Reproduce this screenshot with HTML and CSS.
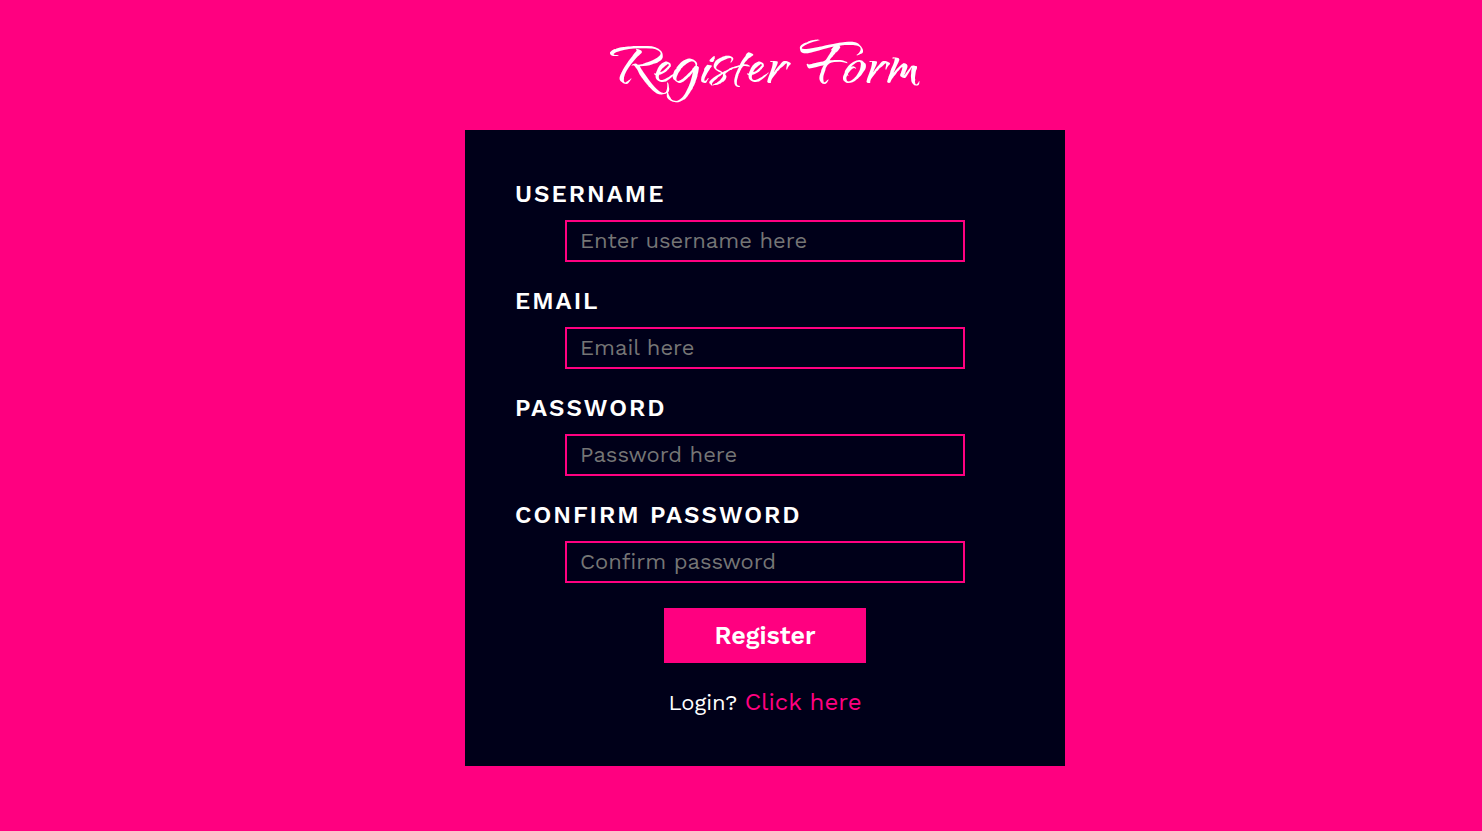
FILE: index.html
```html
<!DOCTYPE html>
<html lang="en">
<head>
<meta charset="utf-8">
<title>Register Form</title>
<link rel="stylesheet" href="styles.css">
</head>
<body>
<main class="page">
  <h1 class="title">Register Form</h1>
  <form class="card">
    <div class="field">
      <label class="label" for="username">USERNAME</label>
      <input class="input" id="username" type="text" placeholder="Enter username here">
    </div>
    <div class="field">
      <label class="label" for="email">EMAIL</label>
      <input class="input" id="email" type="email" placeholder="Email here">
    </div>
    <div class="field">
      <label class="label" for="password">PASSWORD</label>
      <input class="input" id="password" type="password" placeholder="Password here">
    </div>
    <div class="field">
      <label class="label" for="confirm">CONFIRM PASSWORD</label>
      <input class="input" id="confirm" type="password" placeholder="Confirm password">
    </div>
    <button class="submit" type="submit">Register</button>
    <p class="login">Login? <a class="link" href="#">Click here</a></p>
  </form>
</main>
</body>
</html>
```
FILE: styles.css
```css
* {
  box-sizing: border-box;
}

body {
  margin: 0;
  background: #ff0080;
  color: #fff;
  font-family: "Work Sans", Inter, sans-serif;
}

.page {
  display: flex;
  flex-direction: column;
  align-items: center;
  padding: 25px 0 64px 48px;
}

.title {
  margin: 0 0 33px;
  font: 700 80px/72px "Qwitcher Grypen", Arizonia, "Liberation Serif", cursive;
}

.card {
  display: flex;
  flex-direction: column;
  align-items: center;
  width: 100%;
  max-width: 600px;
  padding: 50px;
  background: #000019;
}

.field {
  display: flex;
  flex-direction: column;
  width: 100%;
  margin-bottom: 25px;
}

.label {
  margin-bottom: 12px;
  font-size: 24px;
  line-height: 28px;
  font-weight: 600;
  letter-spacing: 2px;
}

.input {
  height: 42px;
  margin: 0 50px;
  padding: 0 13px 2px;
  border: 2px solid #ff0080;
  border-radius: 0;
  outline: 0;
  background: transparent;
  color: #fff;
  font: 400 22px "Work Sans", Inter, sans-serif;
}

.input::placeholder {
  color: #757575;
  opacity: 1;
}

.submit {
  width: 202px;
  height: 55px;
  border: 0;
  background: #ff0080;
  color: #fff;
  font: 600 25px "Work Sans", Inter, sans-serif;
  cursor: pointer;
}

.login {
  margin: 26px 0 0;
  font-size: 22px;
  line-height: 26px;
}

.link {
  color: #ff0080;
  font-size: 24px;
  text-decoration: none;
}
```
